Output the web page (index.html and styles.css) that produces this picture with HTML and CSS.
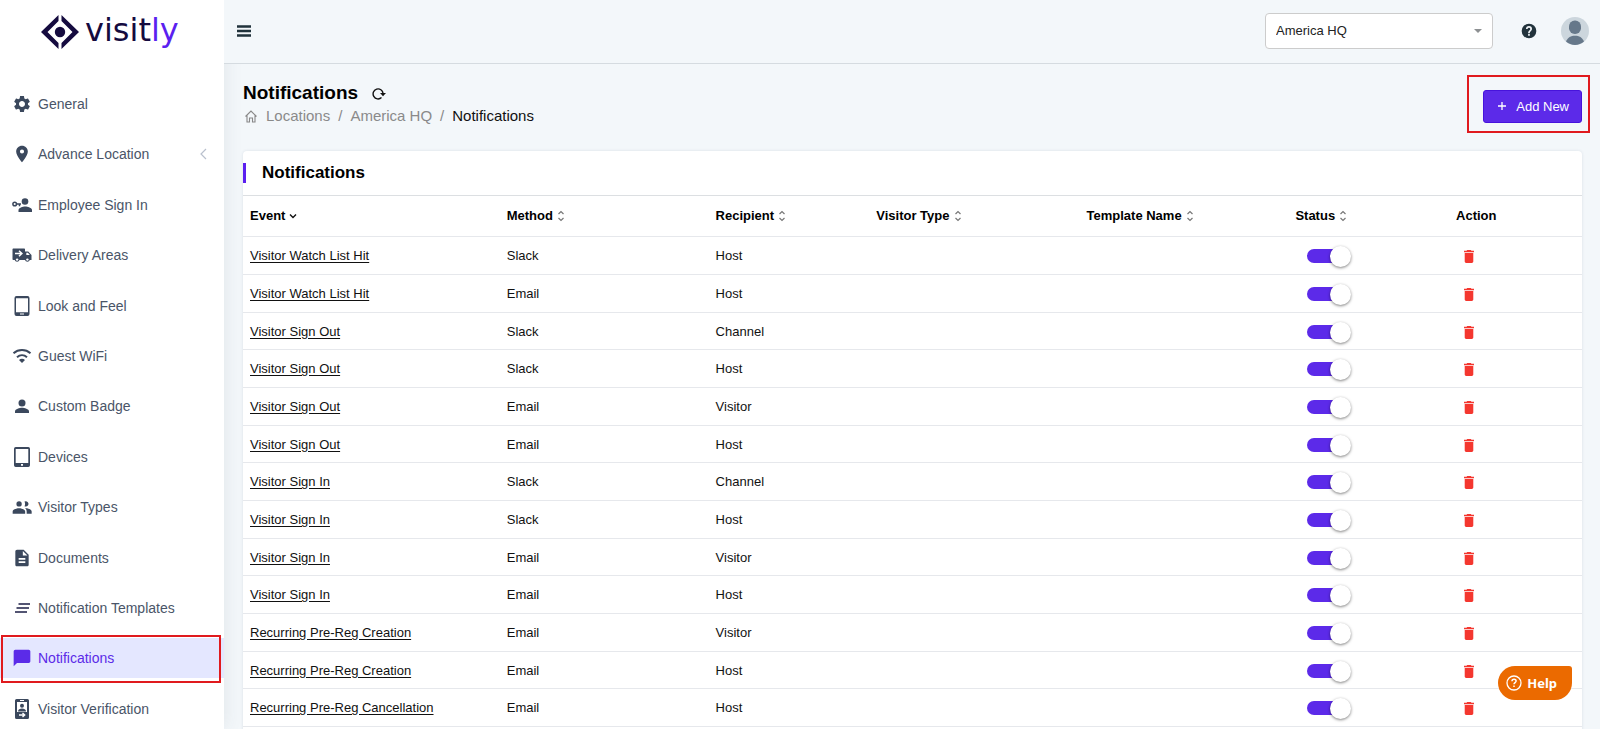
FILE: index.html
```html
<!DOCTYPE html>
<html lang="en">
<head>
  <meta charset="UTF-8" />
  <meta name="viewport" content="width=device-width, initial-scale=1.0"/>
  <title>Notifications - Visitly</title>
  <link rel="stylesheet" href="styles.css">
</head>
<body>

  <!-- Shared icons -->
  <svg class="sprite" aria-hidden="true">
    <symbol id="sort" viewBox="0 0 8 12"><path d="M1.500 4 4 1.500 6.500 4M1.500 8 4 10.500 6.500 8" fill="none" stroke="#777" stroke-width="1.200"/></symbol>
    <symbol id="trash" viewBox="5 3 14 18"><path d="M6 19c0 1.100.9 2 2 2h8c1.100 0 2-.9 2-2V7H6v12zM19 4h-3.500l-1-1h-5l-1 1H5v2h14V4z"/></symbol>
  </svg>

  <!-- Sidebar -->
  <aside class="sidebar">
    <a class="logo" href="#" aria-label="Visitly">
      <svg width="38" height="34" viewBox="0 0 38 34" fill="#150b3f">
        <path d="M17.500 0v6L6.500 17l11 11v6L0 17zM20.500 0v6l11 11-11 11v6L38 17z"/>
        <circle cx="19" cy="17" r="5.200"/>
      </svg>
      <span class="logo-text">visit<span>ly</span></span>
    </a>

    <nav class="nav">
      <a class="nav-item" href="#">
        <svg viewBox="0 0 24 24"><path d="M19.140 12.940c.04-.3.06-.61.06-.94 0-.32-.02-.64-.07-.94l2.030-1.580c.18-.14.23-.41.12-.61l-1.920-3.320c-.12-.22-.37-.29-.59-.22l-2.390.96c-.5-.38-1.030-.7-1.620-.94L14.400 2.810c-.04-.24-.24-.41-.48-.41h-3.840c-.24 0-.43.17-.47.41L9.250 5.350c-.59.24-1.130.57-1.620.94l-2.390-.96c-.22-.08-.47 0-.59.22L2.740 8.870c-.12.21-.08.47.12.61l2.030 1.580c-.05.3-.09.63-.09.94s.02.64.07.94l-2.030 1.580c-.18.14-.23.41-.12.61l1.920 3.320c.12.22.37.29.59.22l2.390-.96c.5.38 1.030.7 1.620.94l.36 2.540c.05.24.24.41.48.41h3.840c.24 0 .44-.17.47-.41l.36-2.540c.59-.24 1.130-.56 1.620-.94l2.390.96c.22.08.47 0 .59-.22l1.920-3.320c.12-.22.07-.47-.12-.61l-2.010-1.580zM12 15.600c-1.980 0-3.600-1.620-3.600-3.600s1.620-3.600 3.600-3.600 3.600 1.620 3.600 3.600-1.620 3.600-3.600 3.600z"/></svg>
        General
      </a>
      <a class="nav-item" href="#">
        <svg viewBox="0 0 24 24"><path d="M12 2C8.130 2 5 5.130 5 9c0 5.250 7 13 7 13s7-7.750 7-13c0-3.870-3.130-7-7-7zm0 9.500a2.500 2.500 0 0 1 0-5 2.500 2.500 0 0 1 0 5z"/></svg>
        Advance Location
        <svg class="nav-arrow" viewBox="0 0 8 12"><path d="M7 1 2 6l5 5" fill="none" stroke="#b9c0cd" stroke-width="1.200"/></svg>
      </a>
      <a class="nav-item" href="#">
        <svg viewBox="0 0 20 20"><circle cx="13" cy="6.500" r="3.300"/><path d="M6.500 17v-2c0-2.300 4.300-3.600 6.700-3.600s6.800 1.300 6.800 3.600v2z"/><path d="M4.300 9H9M7.500 9v2.300" fill="none" stroke="currentColor" stroke-width="1.500"/><circle cx="2.700" cy="9" r="1.800" fill="none" stroke="currentColor" stroke-width="1.500"/></svg>
        Employee Sign In
      </a>
      <a class="nav-item" href="#">
        <svg viewBox="0 0 20 20"><path d="M1.500 3.500H12c.6 0 1 .4 1 1V6.500h3.200L19.500 10v5h-1.700a2.500 2.500 0 0 1-4.800 0H7.500a2.500 2.500 0 0 1-4.800 0H1.500c-.6 0-1-.4-1-1v-9.500c0-.6.4-1 1-1z"/><path d="M3 8.500h6M7 5.800l2.900 2.700L7 11.200" fill="none" stroke="#fff" stroke-width="1.500"/><path d="M14.300 7.700h1.600l1.900 2.300h-3.500z" fill="#fff"/><circle cx="5.100" cy="14.600" r="1.200" fill="#fff"/><circle cx="15.400" cy="14.600" r="1.200" fill="#fff"/></svg>
        Delivery Areas
      </a>
      <a class="nav-item" href="#">
        <svg viewBox="0 0 20 20"><path fill-rule="evenodd" d="M4.500 0h11A2 2 0 0 1 17.500 2v16a2 2 0 0 1-2 2h-11a2 2 0 0 1-2-2V2a2 2 0 0 1 2-2zM4 2.200v14h12v-14zM8 17.600v1h4v-1z"/></svg>
        Look and Feel
      </a>
      <a class="nav-item" href="#">
        <svg viewBox="0 0 20 20" fill="none" stroke="currentColor" stroke-width="2"><path class="line" d="M1.500 7.200c4.900-4.300 12.100-4.300 17 0M5 11.200c2.900-2.500 7.100-2.500 10 0"/><path d="M10 17l-3-3.100c1.700-1.500 4.300-1.500 6 0z" stroke="none"/></svg>
        Guest WiFi
      </a>
      <a class="nav-item" href="#">
        <svg viewBox="0 0 20 20"><circle cx="10" cy="7" r="3.500"/><path d="M3 17v-1.800c0-2.300 4.700-3.500 7-3.500s7 1.200 7 3.500V17z"/></svg>
        Custom Badge
      </a>
      <a class="nav-item" href="#">
        <svg viewBox="0 0 20 20"><path fill-rule="evenodd" d="M3.700 0h12.600A1.700 1.700 0 0 1 18 1.700v16.600a1.700 1.700 0 0 1-1.700 1.700H3.700A1.700 1.700 0 0 1 2 18.300V1.700A1.700 1.700 0 0 1 3.700 0zM3.700 2v14h12.600V2zM9 17v1.800h2V17z"/></svg>
        Devices
      </a>
      <a class="nav-item" href="#">
        <svg viewBox="0 0 24 24"><path d="M16.500 11.500a3.200 3.200 0 1 0-1.500-6c.9 1.700.9 3.900 0 5.600.4.200.9.400 1.500.4zM8.500 11.500a3.200 3.200 0 1 0 0-6.400 3.200 3.200 0 0 0 0 6.400zm0 2C6 13.500.8 14.800.8 17.300V20h15v-2.700c0-2.500-4.900-3.800-7.300-3.800zm8 0h-.9c1.200.9 2 2.100 2 3.800V20h6v-2.700c0-2.500-4.700-3.800-7.100-3.800z"/></svg>
        Visitor Types
      </a>
      <a class="nav-item" href="#">
        <svg viewBox="0 0 24 24"><path d="M14 2H6c-1.100 0-2 .9-2 2v16c0 1.100.9 2 2 2h12c1.100 0 2-.9 2-2V8l-6-6zm2 16H8v-2h8v2zm0-4H8v-2h8v2zm-3-5V3.500L18.500 9H13z"/></svg>
        Documents
      </a>
      <a class="nav-item" href="#">
        <svg viewBox="0 0 20 20"><path d="M6.500 6H18M4.500 10H17M3 14h12" fill="none" stroke="#1b1e45" stroke-width="1.600"/></svg>
        Notification Templates
      </a>
      <a class="nav-item active" href="#" aria-current="page">
        <svg viewBox="0 0 24 24"><path d="M20 2H4c-1.100 0-2 .9-2 2v18l4-4h14c1.100 0 2-.9 2-2V4c0-1.100-.9-2-2-2z"/></svg>
        Notifications
      </a>
      <a class="nav-item" href="#">
        <svg viewBox="0 0 20 20"><path fill-rule="evenodd" d="M4.500 0h11A1.500 1.500 0 0 1 17 1.500v17a1.500 1.500 0 0 1-1.500 1.500h-11A1.500 1.500 0 0 1 3 18.500v-17A1.500 1.500 0 0 1 4.500 0zM5 3v10h10V3zM8 1v1h4V1z"/><circle cx="10" cy="6.700" r="2"/><path d="M6 12.500c0-2.200 2-3 4-3s4 .8 4 3z"/><path d="M7 16h5M10.500 14l2.200 2-2.200 2" fill="none" stroke="#fff" stroke-width="1.400"/></svg>
        Visitor Verification
      </a>
    </nav>
  </aside>

  <div class="page">
    <!-- Top bar -->
    <header class="topbar">
      <button class="icon-btn" aria-label="Toggle menu">
        <svg width="14" height="12" viewBox="0 0 14 12"><path d="M0 1.500h14M0 6h14M0 10.500h14" stroke="#20323b" stroke-width="2.500"/></svg>
      </button>
      <div class="topbar-right">
        <div class="select-wrap">
          <select class="location-select" aria-label="Location">
            <option>America HQ</option>
          </select>
          <svg class="caret" width="8" height="4" viewBox="0 0 8 4"><path d="M0 0h8L4 4z" fill="#8d9092"/></svg>
        </div>
        <button class="icon-btn" aria-label="Help center">
          <svg width="16" height="16" viewBox="0 0 24 24" fill="#22333c"><path d="M12 1a11 11 0 1 0 0 22 11 11 0 0 0 0-22zm1.200 18h-2.500v-2.500h2.500V19zm2.400-7.800-1 1.100c-.9.800-1.400 1.500-1.400 3h-2.500v-.6c0-1.200.5-2.200 1.300-3l1.300-1.300c.4-.4.6-.9.6-1.400a2 2 0 0 0-4 0H7.500a4.500 4.500 0 0 1 9 0c0 .8-.4 1.600-.9 2.200z"/></svg>
        </button>
        <button class="icon-btn" aria-label="Account">
          <svg width="28" height="28" viewBox="0 0 28 28"><circle cx="14" cy="14" r="14" fill="#ccd6dd"/><rect x="8" y="3.500" width="12" height="13.500" rx="5.800" fill="#66788a"/><path d="M5 24.600C6.500 20.500 10 18.800 14 18.800s7.500 1.700 9 5.800A14 14 0 0 1 14 28a14 14 0 0 1-9-3.400z" fill="#66788a"/></svg>
        </button>
      </div>
    </header>

    <main class="content">
      <div class="page-head">
        <div>
          <div class="title-row">
            <h1>Notifications</h1>
            <button class="icon-btn" aria-label="Refresh">
              <svg width="14" height="14" viewBox="0 0 14 14"><path d="M9.500 11.600A5 5 0 1 1 11.100 7.500" fill="none" stroke="#111" stroke-width="1.400"/><path d="M8 7h6l-3 3.200z" fill="#111"/></svg>
            </button>
          </div>
          <nav class="breadcrumb" aria-label="Breadcrumb">
            <a href="#"><svg width="12" height="13" viewBox="0 0 12 13" fill="none" stroke="#888" stroke-width="1.100"><path d="M.5 6.500 6 1l5.500 5.500M2 5.500V12h2.500V8h3v4H10V5.500"/></svg>Locations</a>
            <span>/</span>
            <a href="#">America HQ</a>
            <span>/</span>
            <span class="current">Notifications</span>
          </nav>
        </div>
        <div class="add-wrap">
          <button class="add-btn"><svg width="10" height="10" viewBox="0 0 10 10"><path d="M5 1v8M1 5h8" stroke="#fff" stroke-width="1.300"/></svg>Add New</button>
        </div>
      </div>

      <section class="card">
        <div class="card-head"><h2>Notifications</h2></div>
        <table class="table">
          <colgroup>
            <col class="col-event"><col class="col-method"><col class="col-recipient"><col class="col-type"><col class="col-template"><col class="col-status"><col class="col-action">
          </colgroup>
          <thead>
            <tr>
              <th>Event<svg class="sort" viewBox="0 0 8 12"><path d="M1 4.500 4 7.500l3-3" fill="none" stroke="#111" stroke-width="1.400"/></svg></th>
              <th>Method<svg class="sort"><use href="#sort"/></svg></th>
              <th>Recipient<svg class="sort"><use href="#sort"/></svg></th>
              <th>Visitor Type<svg class="sort"><use href="#sort"/></svg></th>
              <th>Template Name<svg class="sort"><use href="#sort"/></svg></th>
              <th>Status<svg class="sort"><use href="#sort"/></svg></th>
              <th>Action</th>
            </tr>
          </thead>
          <tbody>
            <tr><td><a href="#">Visitor Watch List Hit</a></td><td>Slack</td><td>Host</td><td></td><td></td><td><input class="switch" type="checkbox" aria-label="Status" checked></td><td><button class="delete-btn" aria-label="Delete"><svg><use href="#trash"/></svg></button></td></tr>
            <tr><td><a href="#">Visitor Watch List Hit</a></td><td>Email</td><td>Host</td><td></td><td></td><td><input class="switch" type="checkbox" aria-label="Status" checked></td><td><button class="delete-btn" aria-label="Delete"><svg><use href="#trash"/></svg></button></td></tr>
            <tr><td><a href="#">Visitor Sign Out</a></td><td>Slack</td><td>Channel</td><td></td><td></td><td><input class="switch" type="checkbox" aria-label="Status" checked></td><td><button class="delete-btn" aria-label="Delete"><svg><use href="#trash"/></svg></button></td></tr>
            <tr><td><a href="#">Visitor Sign Out</a></td><td>Slack</td><td>Host</td><td></td><td></td><td><input class="switch" type="checkbox" aria-label="Status" checked></td><td><button class="delete-btn" aria-label="Delete"><svg><use href="#trash"/></svg></button></td></tr>
            <tr><td><a href="#">Visitor Sign Out</a></td><td>Email</td><td>Visitor</td><td></td><td></td><td><input class="switch" type="checkbox" aria-label="Status" checked></td><td><button class="delete-btn" aria-label="Delete"><svg><use href="#trash"/></svg></button></td></tr>
            <tr><td><a href="#">Visitor Sign Out</a></td><td>Email</td><td>Host</td><td></td><td></td><td><input class="switch" type="checkbox" aria-label="Status" checked></td><td><button class="delete-btn" aria-label="Delete"><svg><use href="#trash"/></svg></button></td></tr>
            <tr><td><a href="#">Visitor Sign In</a></td><td>Slack</td><td>Channel</td><td></td><td></td><td><input class="switch" type="checkbox" aria-label="Status" checked></td><td><button class="delete-btn" aria-label="Delete"><svg><use href="#trash"/></svg></button></td></tr>
            <tr><td><a href="#">Visitor Sign In</a></td><td>Slack</td><td>Host</td><td></td><td></td><td><input class="switch" type="checkbox" aria-label="Status" checked></td><td><button class="delete-btn" aria-label="Delete"><svg><use href="#trash"/></svg></button></td></tr>
            <tr><td><a href="#">Visitor Sign In</a></td><td>Email</td><td>Visitor</td><td></td><td></td><td><input class="switch" type="checkbox" aria-label="Status" checked></td><td><button class="delete-btn" aria-label="Delete"><svg><use href="#trash"/></svg></button></td></tr>
            <tr><td><a href="#">Visitor Sign In</a></td><td>Email</td><td>Host</td><td></td><td></td><td><input class="switch" type="checkbox" aria-label="Status" checked></td><td><button class="delete-btn" aria-label="Delete"><svg><use href="#trash"/></svg></button></td></tr>
            <tr><td><a href="#">Recurring Pre-Reg Creation</a></td><td>Email</td><td>Visitor</td><td></td><td></td><td><input class="switch" type="checkbox" aria-label="Status" checked></td><td><button class="delete-btn" aria-label="Delete"><svg><use href="#trash"/></svg></button></td></tr>
            <tr><td><a href="#">Recurring Pre-Reg Creation</a></td><td>Email</td><td>Host</td><td></td><td></td><td><input class="switch" type="checkbox" aria-label="Status" checked></td><td><button class="delete-btn" aria-label="Delete"><svg><use href="#trash"/></svg></button></td></tr>
            <tr><td><a href="#">Recurring Pre-Reg Cancellation</a></td><td>Email</td><td>Host</td><td></td><td></td><td><input class="switch" type="checkbox" aria-label="Status" checked></td><td><button class="delete-btn" aria-label="Delete"><svg><use href="#trash"/></svg></button></td></tr>
          </tbody>
        </table>
      </section>
    </main>
  </div>

  <!-- Floating help button -->
  <button class="help-btn">
    <svg width="16" height="16" viewBox="0 0 16 16" fill="none" stroke="#fff"><circle cx="8" cy="8" r="7" stroke-width="1.300"/><path d="M6 6.300c0-2.700 4.100-2.500 4.100-.2 0 1.500-2.100 1.500-2.100 3.200M8 10.600V12" stroke-width="1.500"/></svg>
    Help
  </button>

</body>
</html>
```
FILE: styles.css
```css
* { margin: 0; padding: 0; box-sizing: border-box; }

body {
  display: flex;
  height: 100vh;
  overflow: hidden;
  font-family: Arial, "Liberation Sans", sans-serif;
  font-size: 13px;
  color: #111;
  background: #f3f7fa;
}

a { color: inherit; text-decoration: none; }

button {
  font-family: inherit;
  border: none;
  background: none;
  cursor: pointer;
}

.sprite { position: absolute; width: 0; height: 0; }

.icon-btn { display: flex; }

/* Sidebar */
.sidebar {
  display: flex;
  flex-direction: column;
  flex: none;
  width: 224px;
  background: #fff;
  box-shadow: 0 0 18px rgba(60, 70, 80, 0.1);
}

.logo {
  display: flex;
  align-items: center;
  gap: 6px;
  flex: none;
  height: 64px;
  margin-bottom: 20px;
  padding-left: 41px;
}

.logo-text {
  font-family: "DejaVu Sans", sans-serif;
  font-size: 32px;
  line-height: 40px;
  padding-bottom: 4px;
  color: #150b3f;
}

.logo-text span { color: #5b1ff0; }

.nav {
  display: flex;
  flex: 1;
  flex-direction: column;
  justify-content: space-between;
}

.nav-item {
  position: relative;
  display: flex;
  align-items: center;
  gap: 6px;
  height: 40px;
  padding: 0 17px 0 12px;
  font-size: 14px;
  color: #4a5568;
}

.nav-item svg {
  width: 20px;
  height: 20px;
  color: #3b485d;
  fill: currentColor;
}

.nav-item .line { fill: none; }

.nav-item .nav-arrow {
  width: 8px;
  height: 12px;
  margin-left: auto;
}

.nav-item.active {
  color: #5b2be8;
  background: #e4e7ff;
}

.nav-item.active svg { color: #5b2be8; }

.nav-item.active::after {
  content: '';
  position: absolute;
  inset: -3px 3px -5px 1px;
  border: 2px solid #e01a1e;
}

/* Top bar */
.page {
  display: flex;
  flex: 1;
  flex-direction: column;
  min-width: 0;
}

.topbar {
  position: relative;
  display: flex;
  align-items: center;
  justify-content: space-between;
  flex: none;
  height: 64px;
  padding: 0 11px 2px 13px;
  background: #f3f7fa;
  border-bottom: 1px solid #d5dbe0;
}

.topbar-right {
  display: flex;
  align-items: center;
}

.topbar-right .icon-btn { margin-left: 28px; }

.topbar-right .icon-btn:last-child { margin-left: 24px; }

.select-wrap { position: relative; }

.location-select {
  display: block;
  appearance: none;
  width: 228px;
  height: 36px;
  padding: 0 30px 0 10px;
  font-family: inherit;
  font-size: 13px;
  color: #222;
  background: #fff;
  border: 1px solid #ccc;
  border-radius: 4px;
}

.caret {
  position: absolute;
  top: 16px;
  right: 11px;
  pointer-events: none;
}

/* Page heading */
.content {
  flex: 1;
  min-height: 0;
  padding: 17px 18px 0 19px;
  overflow-y: auto;
  scrollbar-width: none;
}

.page-head {
  display: flex;
  align-items: center;
  justify-content: space-between;
  height: 50px;
  margin-bottom: 20px;
}

.page-head > div:first-child { align-self: flex-start; }

.title-row {
  display: flex;
  align-items: center;
  gap: 14px;
}

h1 {
  font-size: 19px;
  line-height: 24px;
  color: #000;
}

.breadcrumb {
  display: flex;
  gap: 8px;
  font-size: 15px;
  line-height: 22px;
  color: #8a8a8a;
}

.breadcrumb a {
  display: flex;
  align-items: center;
}

.breadcrumb svg { margin: 0 9px 0 2px; }

.breadcrumb .current { color: #111; }

.add-wrap { position: relative; }

.add-wrap::after {
  content: '';
  position: absolute;
  inset: -15px -8px -10px -16px;
  border: 2px solid #e01a1e;
  pointer-events: none;
}

.add-btn {
  display: flex;
  align-items: center;
  gap: 9px;
  height: 33px;
  padding: 0 12px 0 13px;
  font-size: 13px;
  font-weight: 500;
  color: #fff;
  background: #5c2ae9;
  border: 1px solid #4713dc;
  border-radius: 3px;
}

/* Table card */
.card {
  min-height: 620px;
  background: #fff;
  border-radius: 4px;
  box-shadow: 0 0 3px rgba(40, 60, 90, 0.12);
}

.card-head {
  display: flex;
  align-items: center;
  height: 45px;
  border-bottom: 1px solid #dcdfe2;
}

.card-head h2 {
  padding-left: 16px;
  font-size: 17px;
  line-height: 20px;
  color: #000;
  border-left: 3px solid #5b1ff0;
}

.table {
  width: 100%;
  table-layout: fixed;
  border-collapse: separate;
  border-spacing: 0;
}

.col-event { width: 19.1%; }
.col-method { width: 15.6%; }
.col-recipient { width: 12%; }
.col-type { width: 15.7%; }
.col-template { width: 15.6%; }
.col-status { width: 12%; }
.col-action { width: 10%; }

.table th,
.table td {
  height: 38px;
  padding: 0 8px;
  text-align: left;
  white-space: nowrap;
  border-bottom: 1px solid #e6e8ec;
}

.table tr:nth-child(3n) td { height: 37px; }

.table th {
  height: 41px;
  padding-bottom: 2px;
  color: #000;
}

.table th:first-child,
.table td:first-child { padding-left: 7px; }

.table td a { text-decoration: underline; text-underline-offset: 2px; }

.sort {
  width: 8px;
  height: 12px;
  margin-left: 4px;
  vertical-align: -2px;
}

.switch {
  position: relative;
  display: block;
  appearance: none;
  width: 44px;
  height: 21px;
  margin: 2px 0 0 12px;
  cursor: pointer;
}

.switch::before {
  content: '';
  position: absolute;
  inset: 3px 4px 4px 0;
  border-radius: 7px;
  background: #bbb;
}

.switch::after {
  content: '';
  position: absolute;
  top: 0;
  left: 0;
  width: 21px;
  height: 21px;
  border-radius: 50%;
  background: #fff;
  box-shadow: 0 1px 3px rgba(0, 0, 0, 0.5);
}

.switch:checked::before { background: #5c2ae9; }
.switch:checked::after { left: 23px; }

.delete-btn {
  display: block;
  margin: 2px 0 0 8px;
}

.delete-btn svg {
  display: block;
  width: 10px;
  height: 13px;
  fill: #f4372f;
}

/* Help */
.help-btn {
  position: fixed;
  right: 28px;
  bottom: 29px;
  display: flex;
  align-items: center;
  gap: 5px;
  height: 34px;
  padding: 0 15px 0 8px;
  font-family: "Noto Sans", sans-serif;
  font-size: 13px;
  font-weight: 700;
  color: #fff;
  background: #eb6a00;
  border-radius: 17px 3px 17px 17px;
}
```
